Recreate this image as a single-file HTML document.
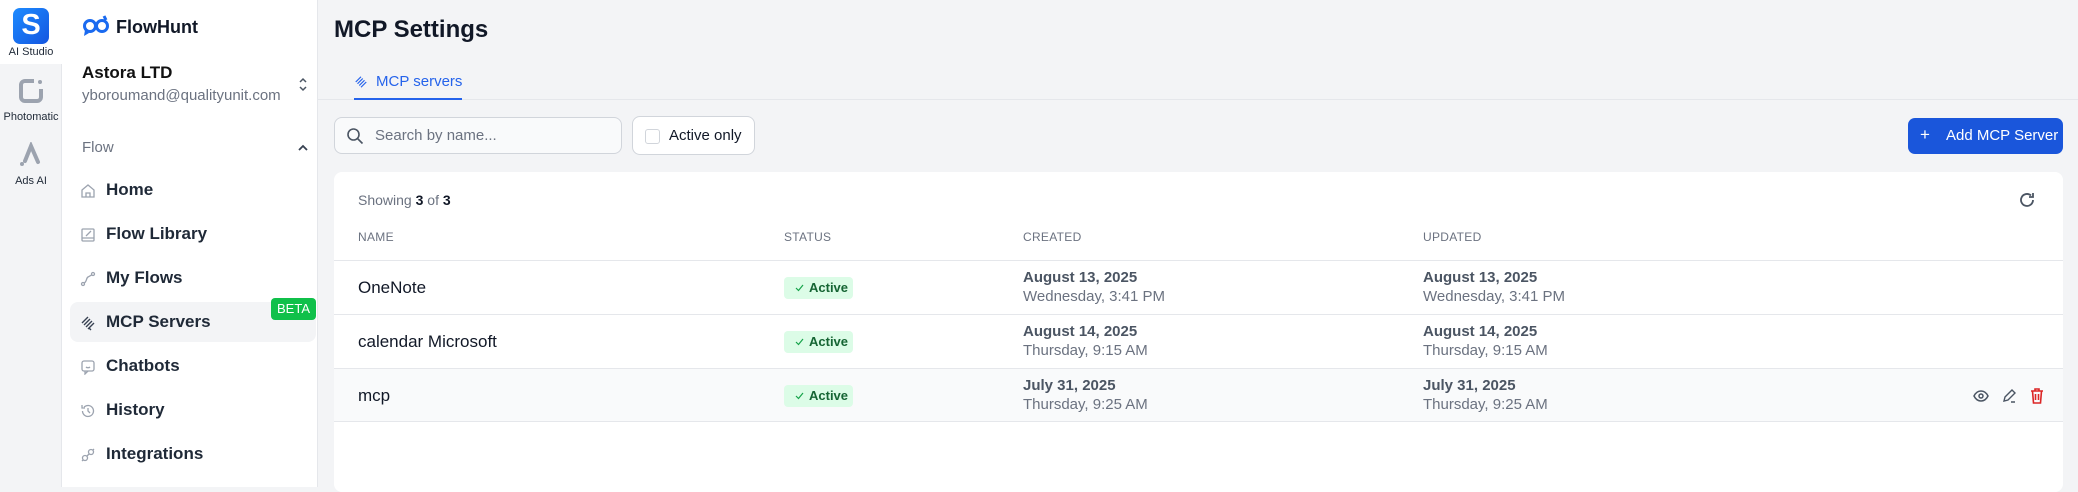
<!DOCTYPE html>
<html><head><meta charset="utf-8"><style>
*{box-sizing:border-box;margin:0;padding:0}
body{width:2078px;height:487px;overflow:hidden;background:#f3f4f6;font-family:"Liberation Sans",sans-serif;color:#111827;position:relative}
.abs{position:absolute}
.rail{left:0;top:0;width:62px;height:487px;background:#f3f4f6;border-right:1px solid #e5e7eb}
.railtop{left:0;top:0;width:62px;height:64px;background:#fff}
.side{left:62px;top:0;width:256px;height:487px;background:#fff;border-right:1px solid #e5e7eb}
.item{position:absolute;left:106px;font-size:17px;font-weight:bold;color:#1f2937;line-height:20px}
.ico{position:absolute;left:80px}
.th{position:absolute;top:230px;font-size:12px;color:#6b7280;letter-spacing:.3px}
.line{position:absolute;left:334px;width:1729px;height:1px;background:#e5e7eb}
.name{position:absolute;left:358px;font-size:17px;color:#111827}
.badge{position:absolute;left:784px;width:69px;height:22px;background:#dcfce7;border-radius:4px;color:#166534;font-size:13px;font-weight:bold;line-height:22px;padding-left:25px}
.badge svg{position:absolute;left:11px;top:7px}
.d1{position:absolute;font-size:15px;font-weight:bold;color:#4b5563}
.d2{position:absolute;font-size:15px;color:#6b7280}
</style></head><body>
<div class="abs rail"></div><div class="abs railtop"></div>
<div class="abs" style="left:13px;top:8px;width:36px;height:36px;border-radius:7px;background:linear-gradient(135deg,#1d8bff,#1456e0)"></div>
<div class="abs" style="left:13px;top:7px;width:36px;text-align:center;color:#fff;font-weight:bold;font-size:29px;line-height:36px">S</div>
<div class="abs" style="left:0;top:46px;width:62px;text-align:center;font-size:11px;color:#1f2937">AI Studio</div>
<svg class="abs" style="left:18px;top:78px" width="26" height="26" viewBox="0 0 26 26"><path d="M16 3H7a4 4 0 0 0-4 4v12a4 4 0 0 0 4 4h12a4 4 0 0 0 4-4v-8" fill="none" stroke="#9ca3af" stroke-width="4"/><circle cx="22" cy="4" r="2" fill="#9ca3af"/></svg>
<div class="abs" style="left:0;top:111px;width:62px;text-align:center;font-size:11px;color:#1f2937">Photomatic</div>
<svg class="abs" style="left:18px;top:142px" width="26" height="26" viewBox="0 0 26 26"><path d="M7 19L13 4l7 16" fill="none" stroke="#9ca3af" stroke-width="4" stroke-linecap="round"/><circle cx="4" cy="22" r="2" fill="#9ca3af"/></svg>
<div class="abs" style="left:0;top:175px;width:62px;text-align:center;font-size:11px;color:#1f2937">Ads AI</div>

<div class="abs side"></div>
<svg class="abs" style="left:82px;top:15px" width="28" height="22" viewBox="0 0 28 22"><circle cx="8" cy="11" r="5.5" fill="none" stroke="#1a6af0" stroke-width="3"/><circle cx="20" cy="11" r="5.5" fill="none" stroke="#1a6af0" stroke-width="3"/><path d="M3 15l-1 6 5-3" fill="#1a6af0"/><path d="M22 1l2 4" stroke="#1a6af0" stroke-width="3"/></svg>
<div class="abs" style="left:116px;top:17px;font-size:18px;font-weight:bold;color:#111827">FlowHunt</div>
<div class="abs" style="left:82px;top:63px;font-size:17px;font-weight:bold;color:#111">Astora LTD</div>
<div class="abs" style="left:82px;top:87px;font-size:15px;color:#6b7280">yboroumand@qualityunit.com</div>
<svg class="abs" style="left:298px;top:77px" width="10" height="15" viewBox="0 0 10 15"><path d="M2 5l3-3 3 3M2 10l3 3 3-3" fill="none" stroke="#4b5563" stroke-width="1.5"/></svg>
<div class="abs" style="left:82px;top:139px;font-size:15px;color:#6b7280">Flow</div>
<svg class="abs" style="left:297px;top:144px" width="12" height="8" viewBox="0 0 12 8"><path d="M2 6l4-4 4 4" fill="none" stroke="#374151" stroke-width="1.8"/></svg>
<div class="abs" style="left:70px;top:302px;width:246px;height:40px;background:#f3f4f6;border-radius:8px"></div>
<div class="abs" style="left:271px;top:298px;width:45px;height:22px;background:#10c04a;border-radius:4px;color:#fff;font-size:13px;text-align:center;line-height:22px">BETA</div>
<svg class="ico" style="top:183px" width="16" height="16" viewBox="0 0 16 16" fill="none" stroke="#9ca3af" stroke-width="1.3"><path d="M2 7l6-5 6 5v7H2zM6 14v-4h4v4"/></svg>
<div class="item" style="top:180px">Home</div>
<svg class="ico" style="top:227px" width="16" height="16" viewBox="0 0 16 16" fill="none" stroke="#9ca3af" stroke-width="1.3"><rect x="2" y="2" width="12" height="12" rx="1"/><path d="M2 11h12M6 9l5-5"/></svg>
<div class="item" style="top:224px">Flow Library</div>
<svg class="ico" style="top:271px" width="16" height="16" viewBox="0 0 16 16" fill="none" stroke="#9ca3af" stroke-width="1.3"><circle cx="3" cy="13" r="1.5"/><circle cx="13" cy="3" r="1.5"/><path d="M4 12c3-1 2-5 4-6s3-2 4-2"/></svg>
<div class="item" style="top:268px">My Flows</div>
<svg class="ico" style="top:315px" width="16" height="16" viewBox="0 0 16 16" fill="none" stroke="#374151" stroke-width="1.4"><path d="M2 8l6-6M4 10l6-6M6 12l6-6M8 14l6-6M9 13l2 2"/></svg>
<div class="item" style="top:312px">MCP Servers</div>
<svg class="ico" style="top:359px" width="16" height="16" viewBox="0 0 16 16" fill="none" stroke="#9ca3af" stroke-width="1.3"><rect x="2" y="2" width="12" height="10" rx="2"/><path d="M5 12v3l3-3M6 8c1 1 3 1 4 0"/></svg>
<div class="item" style="top:356px">Chatbots</div>
<svg class="ico" style="top:403px" width="16" height="16" viewBox="0 0 16 16" fill="none" stroke="#9ca3af" stroke-width="1.3"><path d="M2.5 8a5.5 5.5 0 1 0 1.6-3.9M2 2v3h3M8 5v3l2 2"/></svg>
<div class="item" style="top:400px">History</div>
<svg class="ico" style="top:447px" width="16" height="16" viewBox="0 0 16 16" fill="none" stroke="#9ca3af" stroke-width="1.3"><circle cx="5" cy="11" r="2.5"/><circle cx="11" cy="5" r="2.5"/><path d="M2 14l1-1M13 3l1-1M7 9l2-2"/></svg>
<div class="item" style="top:444px">Integrations</div>

<div class="abs" style="left:334px;top:16px;font-size:24px;font-weight:bold;color:#111827">MCP Settings</div>
<div class="abs" style="left:318px;top:99px;width:1760px;height:1px;background:#e5e7eb"></div>
<svg class="abs" style="left:354px;top:75px" width="14" height="14" viewBox="0 0 16 16" fill="none" stroke="#2563eb" stroke-width="1.4"><path d="M2 8l6-6M4 10l6-6M6 12l6-6M8 14l6-6"/></svg>
<div class="abs" style="left:376px;top:73px;font-size:15px;color:#2563eb">MCP servers</div>
<div class="abs" style="left:354px;top:98px;width:108px;height:2px;background:#2563eb"></div>
<div class="abs" style="left:334px;top:117px;width:288px;height:37px;background:#f9fafb;border:1px solid #d1d5db;border-radius:8px"></div>
<svg class="abs" style="left:346px;top:127px" width="18" height="18" viewBox="0 0 18 18" fill="none" stroke="#4b5563" stroke-width="1.6"><circle cx="7.5" cy="7.5" r="5.5"/><path d="M11.5 11.5l5 5"/></svg>
<div class="abs" style="left:375px;top:127px;font-size:15px;color:#6b7280">Search by name...</div>
<div class="abs" style="left:632px;top:116px;width:123px;height:39px;background:#fff;border:1px solid #d1d5db;border-radius:8px"></div>
<div class="abs" style="left:645px;top:129px;width:15px;height:15px;border:1px solid #d1d5db;border-radius:3px"></div>
<div class="abs" style="left:669px;top:127px;font-size:15px;color:#111827">Active only</div>
<div class="abs" style="left:1908px;top:118px;width:155px;height:36px;background:#1a56db;border-radius:7px;color:#fff;font-size:15px;line-height:36px;padding-left:38px">Add MCP Server</div>
<div class="abs" style="left:1920px;top:117px;color:#fff;font-size:17px;line-height:36px">+</div>

<div class="abs" style="left:334px;top:172px;width:1729px;height:320px;background:#fff;border-radius:8px"></div>
<div class="abs" style="left:358px;top:192px;font-size:14px;color:#6b7280">Showing <b style="color:#111827">3</b> of <b style="color:#111827">3</b></div>
<svg class="abs" style="left:2018px;top:191px" width="18" height="18" viewBox="0 0 18 18" fill="none" stroke="#4b5563" stroke-width="1.8"><path d="M15 9a6 6 0 1 1-2-4.5M15 2v4h-4"/></svg>
<div class="th" style="left:358px">NAME</div><div class="th" style="left:784px">STATUS</div><div class="th" style="left:1023px">CREATED</div><div class="th" style="left:1423px">UPDATED</div>
<div class="abs" style="left:334px;top:368px;width:1729px;height:53px;background:#f9fafb"></div>
<div class="line" style="top:260px"></div><div class="line" style="top:314px"></div><div class="line" style="top:368px"></div><div class="line" style="top:421px"></div>

<div class="name" style="top:278px">OneNote</div>
<div class="badge" style="top:277px"><svg width="9" height="8" viewBox="0 0 9 8"><path d="M1 4l2.5 2.5L8 1" fill="none" stroke="#16a34a" stroke-width="1.2"/></svg>Active</div>
<div class="d1" style="left:1023px;top:269px">August 13, 2025</div><div class="d2" style="left:1023px;top:288px">Wednesday, 3:41 PM</div>
<div class="d1" style="left:1423px;top:269px">August 13, 2025</div><div class="d2" style="left:1423px;top:288px">Wednesday, 3:41 PM</div>

<div class="name" style="top:332px">calendar Microsoft</div>
<div class="badge" style="top:331px"><svg width="9" height="8" viewBox="0 0 9 8"><path d="M1 4l2.5 2.5L8 1" fill="none" stroke="#16a34a" stroke-width="1.2"/></svg>Active</div>
<div class="d1" style="left:1023px;top:323px">August 14, 2025</div><div class="d2" style="left:1023px;top:342px">Thursday, 9:15 AM</div>
<div class="d1" style="left:1423px;top:323px">August 14, 2025</div><div class="d2" style="left:1423px;top:342px">Thursday, 9:15 AM</div>

<div class="name" style="top:386px">mcp</div>
<div class="badge" style="top:385px"><svg width="9" height="8" viewBox="0 0 9 8"><path d="M1 4l2.5 2.5L8 1" fill="none" stroke="#16a34a" stroke-width="1.2"/></svg>Active</div>
<div class="d1" style="left:1023px;top:377px">July 31, 2025</div><div class="d2" style="left:1023px;top:396px">Thursday, 9:25 AM</div>
<div class="d1" style="left:1423px;top:377px">July 31, 2025</div><div class="d2" style="left:1423px;top:396px">Thursday, 9:25 AM</div>
<svg class="abs" style="left:1973px;top:389px" width="16" height="14" viewBox="0 0 16 14" fill="none" stroke="#4b5563" stroke-width="1.5"><path d="M1 7c2-4 5-5 7-5s5 1 7 5c-2 4-5 5-7 5s-5-1-7-5z"/><circle cx="8" cy="7" r="2"/></svg>
<svg class="abs" style="left:2001px;top:388px" width="16" height="16" viewBox="0 0 16 16" fill="none" stroke="#4b5563" stroke-width="1.4"><path d="M3 13l1-4 7-7 3 3-7 7zM10 14h4"/></svg>
<svg class="abs" style="left:2030px;top:387px" width="14" height="17" viewBox="0 0 14 17" fill="none" stroke="#dc2626" stroke-width="1.6"><path d="M1 4h12M5 4V2h4v2M2.5 4l1 12h7l1-12M5.5 7v6M8.5 7v6"/></svg>
</body></html>
